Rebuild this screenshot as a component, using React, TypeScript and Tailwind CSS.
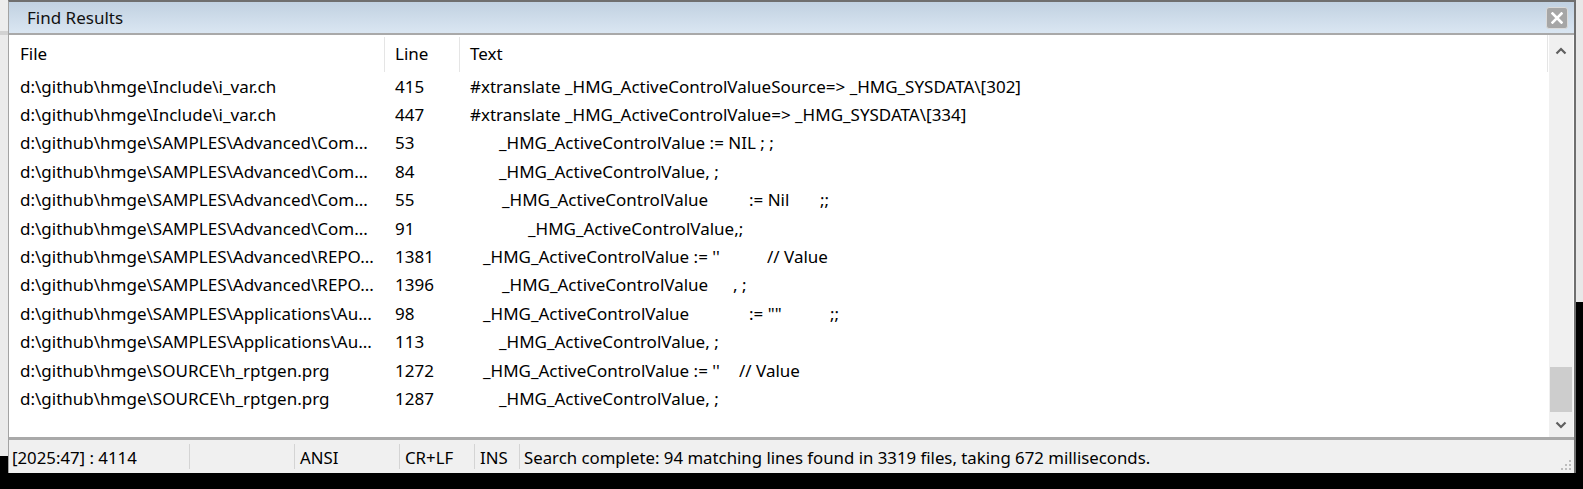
import React from "react";

type Row = { file: string; line: string; segs: [number, string][] };

const rows: Row[] = [
  { file: "d:\\github\\hmge\\Include\\i_var.ch", line: "415", segs: [[470, "#xtranslate _HMG_ActiveControlValueSource=> _HMG_SYSDATA\\[302]"]] },
  { file: "d:\\github\\hmge\\Include\\i_var.ch", line: "447", segs: [[470, "#xtranslate _HMG_ActiveControlValue=> _HMG_SYSDATA\\[334]"]] },
  { file: "d:\\github\\hmge\\SAMPLES\\Advanced\\Com...", line: "53", segs: [[499, "_HMG_ActiveControlValue := NIL ; ;"]] },
  { file: "d:\\github\\hmge\\SAMPLES\\Advanced\\Com...", line: "84", segs: [[499, "_HMG_ActiveControlValue, ;"]] },
  { file: "d:\\github\\hmge\\SAMPLES\\Advanced\\Com...", line: "55", segs: [[502, "_HMG_ActiveControlValue"], [749, ":= Nil"], [820, ";;"]] },
  { file: "d:\\github\\hmge\\SAMPLES\\Advanced\\Com...", line: "91", segs: [[528, "_HMG_ActiveControlValue,;"]] },
  { file: "d:\\github\\hmge\\SAMPLES\\Advanced\\REPO...", line: "1381", segs: [[483, "_HMG_ActiveControlValue := ''"], [767, "// Value"]] },
  { file: "d:\\github\\hmge\\SAMPLES\\Advanced\\REPO...", line: "1396", segs: [[502, "_HMG_ActiveControlValue"], [733, ", ;"]] },
  { file: "d:\\github\\hmge\\SAMPLES\\Applications\\Au...", line: "98", segs: [[483, "_HMG_ActiveControlValue"], [749, ":= \"\""], [830, ";;"]] },
  { file: "d:\\github\\hmge\\SAMPLES\\Applications\\Au...", line: "113", segs: [[499, "_HMG_ActiveControlValue, ;"]] },
  { file: "d:\\github\\hmge\\SOURCE\\h_rptgen.prg", line: "1272", segs: [[483, "_HMG_ActiveControlValue := ''"], [739, "// Value"]] },
  { file: "d:\\github\\hmge\\SOURCE\\h_rptgen.prg", line: "1287", segs: [[499, "_HMG_ActiveControlValue, ;"]] },
];

function TextCell({ segs }: { segs: [number, string][] }) {
  return (
    <div className="flex-1 flex items-center whitespace-pre">
      {segs.map(([x, t], i) => {
        const next = segs[i + 1];
        const style: React.CSSProperties = {};
        if (i === 0) style.marginLeft = x - 459;
        if (next) style.width = next[0] - x;
        return (
          <span key={i} className="inline-block shrink-0" style={style}>
            {t}
          </span>
        );
      })}
    </div>
  );
}

function Chevron({ up }: { up?: boolean }) {
  return (
    <svg width="12" height="8" viewBox="0 0 12 8">
      <path
        d={up ? "M1.5 6.5 L6 2 L10.5 6.5" : "M1.5 1.5 L6 6 L10.5 1.5"}
        fill="none"
        stroke="#5f5f5f"
        strokeWidth="2.2"
      />
    </svg>
  );
}

function Sep() {
  return <div className="w-px h-[25px] bg-[#d4d4d4] self-center shrink-0" />;
}

export default function App() {
  return (
    <div className="flex w-[1583px] h-[489px] bg-black overflow-hidden font-['Noto_Sans',sans-serif] text-[17px] text-black leading-none">
      {/* left background strip */}
      <div className="w-[8px] shrink-0 flex flex-col">
        <div className="h-[31px] bg-[#ededed]" />
        <div className="h-[4px] bg-[#d2d2d2]" />
        <div className="h-[421px] bg-[#ebebeb]" />
      </div>

      {/* window */}
      <div className="w-[1568px] h-[473px] shrink-0 flex flex-col border-l border-l-[#a3a3a3] border-t-2 border-t-[#6f6f6f] border-r-2 border-r-[#6f6f6f] bg-white">
        {/* title bar */}
        <div className="h-[33px] shrink-0 flex items-center justify-between border-b-2 border-b-[#a9a9a9] bg-gradient-to-b from-[#c1d1e1] to-[#dae6f2]">
          <span className="pl-[18px] text-[17px] text-[#111]">Find Results</span>
          <div className="mr-[6px] w-[22px] h-[22px] rounded-[3px] border border-[#dadada] bg-[#a6a6a6] flex items-center justify-center">
            <svg width="12" height="12" viewBox="0 0 12 12">
              <path d="M1.5 1.5 L10.5 10.5 M10.5 1.5 L1.5 10.5" stroke="#ffffff" strokeWidth="2.6" strokeLinecap="square" />
            </svg>
          </div>
        </div>

        {/* body */}
        <div className="h-[402px] shrink-0 flex">
          <div className="w-[1540px] flex flex-col bg-white">
            {/* header */}
            <div className="h-[37px] shrink-0 flex">
              <div className="w-[375px] pl-[11px] flex items-center">File</div>
              <div className="w-px mt-[2px] bg-[#e5e5e5]" />
              <div className="w-[74px] pl-[10px] flex items-center">Line</div>
              <div className="w-px mt-[2px] bg-[#e5e5e5]" />
              <div className="w-[1087px] pl-[10px] flex items-center">Text</div>
              <div className="w-px bg-[#e5e5e5]" />
            </div>
            {rows.map((r, i) => (
              <div key={i} className="h-[28.4px] shrink-0 flex">
                <div className="w-[375px] pl-[11px] flex items-center whitespace-nowrap overflow-hidden">{r.file}</div>
                <div className="w-[75px] pl-[11px] flex items-center">{r.line}</div>
                <TextCell segs={r.segs} />
              </div>
            ))}
          </div>
          {/* scrollbar */}
          <div className="w-[25px] flex flex-col bg-[#f0f0f0] border-r border-r-[#f9f9f9]">
            <div className="h-[30px] flex items-center justify-center pt-[2px]">
              <Chevron up />
            </div>
            <div className="flex-1 flex flex-col justify-end px-[1px]">
              <div className="h-[45px] bg-[#cdcdcd]" />
            </div>
            <div className="h-[25px] flex items-center justify-center">
              <Chevron />
            </div>
          </div>
        </div>

        {/* status bar */}
        <div className="flex-1 flex items-stretch border-t-[3px] border-t-[#a9a9a9] bg-[#f0f0f0] text-[16.8px] relative">
          <div className="w-[180px] pl-[3px] pt-[3px] flex items-center shrink-0">[2025:47] : 4114</div>
          <Sep />
          <div className="w-[104px] shrink-0" />
          <Sep />
          <div className="w-[104px] pl-[5px] pt-[3px] flex items-center shrink-0">ANSI</div>
          <Sep />
          <div className="w-[74px] pl-[5px] pt-[3px] flex items-center shrink-0">CR+LF</div>
          <Sep />
          <div className="w-[44px] pl-[5px] pt-[3px] flex items-center shrink-0">INS</div>
          <Sep />
          <div className="flex-1 pl-[4px] pt-[3px] flex items-center whitespace-nowrap">
            Search complete: 94 matching lines found in 3319 files, taking 672 milliseconds.
          </div>
          <svg className="absolute right-[2px] bottom-[2px]" width="12" height="12" viewBox="0 0 12 12">
            <g fill="#bdbdbd">
              <rect x="9" y="1" width="2" height="2" />
              <rect x="5" y="5" width="2" height="2" />
              <rect x="9" y="5" width="2" height="2" />
              <rect x="1" y="9" width="2" height="2" />
              <rect x="5" y="9" width="2" height="2" />
              <rect x="9" y="9" width="2" height="2" />
            </g>
          </svg>
        </div>
      </div>

      {/* right background strip */}
      <div className="w-[7px] h-[302px] shrink-0 bg-[#e8e8e8]" />
    </div>
  );
}
